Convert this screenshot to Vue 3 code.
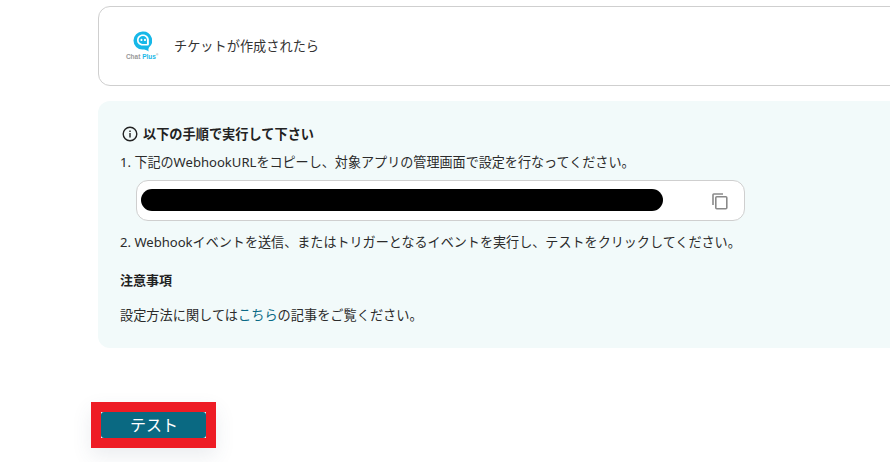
<script setup>
</script>

<template>
  <div class="page">
    <section class="card">
      <div class="logo">
        <svg width="19" height="21" viewBox="0 0 20 22">
          <path d="M10 0.500a9.500 9.500 0 1 0 0 19c2.500 0 4.500.6 6.500 2-.5-1.500-.4-2.900.3-4.300A9.500 9.500 0 0 0 10 .500z" fill="#17b8e8"/>
          <path d="M10.500 3.600c-3.700 0-6.300 2.500-6.300 5.900 0 3.300 2.500 5.800 5.700 5.800h5.300c.9 0 1.500-.6 1.500-1.500V9.500c0-3.400-2.600-5.900-6.200-5.900z" fill="#fff"/>
          <path d="M10.500 5.300c-2.700 0-4.600 1.800-4.600 4.200 0 2.400 1.800 4.100 4 4.100h4.500c.2 0 .3-.1.300-.3V9.500c0-2.400-1.700-4.200-4.200-4.200z" fill="#17b8e8"/>
          <rect x="7.900" y="8" width="2" height="2.600" rx="1" fill="#fff"/>
          <rect x="11.600" y="8" width="2" height="2.600" rx="1" fill="#fff"/>
        </svg>
        <div class="logo-text">Chat <span>Plus</span><sup>®</sup></div>
      </div>
      <p class="card-title">チケットが作成されたら</p>
    </section>

    <section class="panel">
      <h2 class="heading">
        <svg width="16" height="16" viewBox="0 0 16 16" fill="none">
          <circle cx="8" cy="8" r="6.800" stroke="#222" stroke-width="1.400"/>
          <rect x="7.300" y="7" width="1.400" height="4.500" fill="#222"/>
          <rect x="7.300" y="4.500" width="1.400" height="1.500" fill="#222"/>
        </svg>
        以下の手順で実行して下さい
      </h2>
      <p class="step">1. 下記のWebhookURLをコピーし、対象アプリの管理画面で設定を行なってください。</p>
      <div class="url-box">
        <div class="redact"></div>
        <svg class="copy" width="20" height="20" viewBox="0 0 20 20" fill="none" stroke="#8a8a8a" stroke-width="1.600">
          <path d="M3 14V3.800C3 3.300 3.300 3 3.800 3H13"/>
          <rect x="5.800" y="5.800" width="11" height="12" rx="1"/>
        </svg>
      </div>
      <p class="step">2. Webhookイベントを送信、またはトリガーとなるイベントを実行し、テストをクリックしてください。</p>
      <h3 class="note">注意事項</h3>
      <p class="step last">設定方法に関しては<a class="link">こちら</a>の記事をご覧ください。</p>
    </section>

    <div class="actions">
      <button class="test-btn"><span class="test-label">テスト</span></button>
    </div>
  </div>
</template>

<style>
html, body { margin: 0; overflow: hidden; background: #fff; }
</style>

<style scoped>
.page {
  width: 890px;
  height: 462px;
  overflow: hidden;
  box-sizing: border-box;
  padding: 6px 0 0 98px;
  font-family: "Noto Sans", "Noto Sans CJK JP", sans-serif;
  color: #2b2b2b;
  font-size: 13.08px;
}
.card {
  width: 900px;
  height: 80px;
  box-sizing: border-box;
  border: 1px solid #cfcfcf;
  border-radius: 12px;
  display: flex;
  align-items: center;
  padding-left: 27px;
  gap: 16px;
}
.logo {
  width: 32px;
  display: flex;
  flex-direction: column;
  align-items: center;
  gap: 1px;
  margin-top: -1px;
}
.logo-text {
  font-size: 6.500px;
  line-height: 8px;
  color: #999;
  white-space: nowrap;
  font-family: "Liberation Sans", sans-serif;
  font-weight: 700;
}
.logo-text span { color: #17b8e8; }
.logo-text sup { font-size: 3px; line-height: 0; }
.card-title {
  margin: -2px 0 0;
  font-size: 13.200px;
  color: #333;
}
.panel {
  width: 900px;
  height: 247px;
  margin-top: 15px;
  box-sizing: border-box;
  background: #f2fafa;
  border-radius: 12px;
  padding: 23px 0 0 22px;
}
.heading {
  margin: 0 0 0 2px;
  font-size: 13.200px;
  font-weight: 700;
  line-height: 20px;
  display: flex;
  align-items: center;
  gap: 5px;
  color: #222;
}
.step {
  margin: 8px 0 0;
  line-height: 20px;
  white-space: nowrap;
}
.url-box {
  width: 609px;
  height: 41px;
  margin: 8px 0 0 16px;
  box-sizing: border-box;
  background: #fff;
  border: 1px solid #cfcfcf;
  border-radius: 12px;
  display: flex;
  align-items: center;
  justify-content: space-between;
  padding: 0 14px 0 4px;
}
.redact {
  width: 522px;
  height: 22px;
  margin-top: -1px;
  border-radius: 11px;
  background: #000;
}
.url-box + .step { margin-top: 11px; }
.note {
  margin: 18px 0 0;
  font-size: 13px;
  font-weight: 700;
  line-height: 20px;
  color: #222;
}
.note + .step { margin-top: 15px; }
.last { font-size: 13.200px; }
.link { color: #0b6a86; }
.actions {
  margin: 54px 0 0 -7px;
}
.test-btn {
  display: block;
  width: 125px;
  height: 46px;
  box-sizing: border-box;
  border: 10px solid #ee1c25;
  background: #fff;
  font-family: inherit;
  padding: 0;
  box-shadow: 0 8px 20px rgba(60, 80, 110, 0.10);
}
.test-label {
  display: flex;
  align-items: center;
  justify-content: center;
  height: 100%;
  padding: 0 0 2px 1px;
  box-sizing: border-box;
  border-radius: 3px;
  background: #0a6982;
  color: #fff;
  font-size: 16px;
}
</style>
